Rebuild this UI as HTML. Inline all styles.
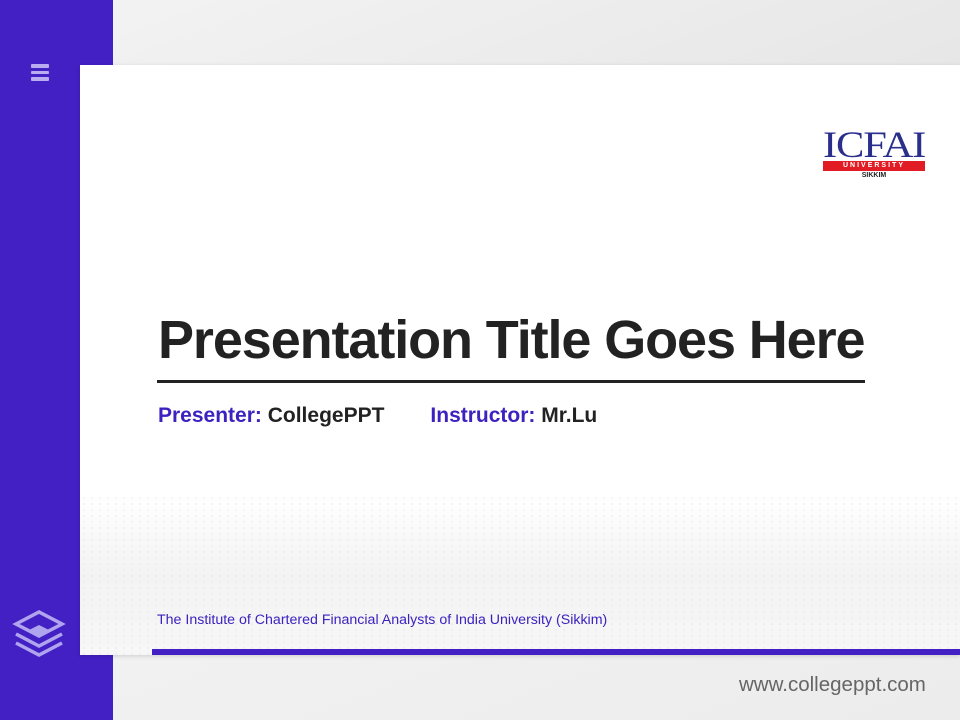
<!DOCTYPE html>
<html><head><style>
body{margin:0;width:960px;height:720px;overflow:hidden;position:relative;font-family:"Liberation Sans",sans-serif;background:linear-gradient(160deg,#f4f4f4,#e6e6e6 40%,#f2f2f2 60%,#ececec)}
.side{position:absolute;left:0;top:0;width:113px;height:720px;background:#4220c4}
.card{position:absolute;left:80px;top:65px;width:880px;height:590px;background:#fff;box-shadow:0 1px 4px rgba(0,0,0,.15);overflow:hidden}
.mesh{position:absolute;left:0;top:430px;width:880px;height:160px;background:linear-gradient(180deg,#fff,#f3f3f3 50%,#f7f7f7);}
.mesh:before{content:"";position:absolute;inset:0;background-image:radial-gradient(#dcdcdc 0.8px,transparent 1px);background-size:8px 6px;opacity:.6}
h1{position:absolute;left:78px;top:244px;margin:0;font-size:54px;font-weight:bold;color:#222;letter-spacing:-1.1px;white-space:nowrap}
.rule{position:absolute;left:77px;top:315px;width:708px;height:3px;background:#222}
.pres{position:absolute;left:78px;top:339px;font-size:21px;font-weight:bold;color:#222;white-space:nowrap}
.pres b{color:#3d22c0}
.foot{position:absolute;left:77px;top:547px;font-size:14.2px;color:#3d22c0;white-space:nowrap}
.bar{position:absolute;left:152px;top:649px;width:808px;height:6px;background:#4220c4}
.www{position:absolute;left:739px;top:673px;font-size:20.5px;color:#666}
</style></head><body>
<div class="side"></div>
<div style="position:absolute;left:31px;top:64px">
<div style="width:18px;height:3.5px;background:#b9adf0;margin-bottom:3px;border-radius:1px"></div>
<div style="width:18px;height:3.5px;background:#b9adf0;margin-bottom:3px;border-radius:1px"></div>
<div style="width:18px;height:3.5px;background:#b9adf0;border-radius:1px"></div></div>
<svg style="position:absolute;left:12px;top:608px" width="54" height="50" viewBox="0 0 54 50"><g fill="none" stroke="#b1a4ee" stroke-width="3.5"><path d="M4 16 L27 4 L50 16 L27 28 Z"/><path d="M4 26 L27 38 L50 26"/><path d="M4 35 L27 47 L50 35"/></g><path d="M17 22 L27 17 L37 22 L27 27 Z" fill="#b1a4ee"/></svg>
<div class="card">
<div class="mesh"></div>
<div style="position:absolute;left:743px;top:66px;width:102px;font-family:'Liberation Serif',serif;font-size:37px;color:#2b2f8c;letter-spacing:-1px;line-height:30px;transform:scaleX(1.15);transform-origin:left">ICFAI</div>
<div style="position:absolute;left:743px;top:96px;width:102px;height:10px;background:#e21c24;color:#fff;font-size:7px;font-weight:bold;text-align:center;line-height:10px;letter-spacing:2px">UNIVERSITY</div>
<div style="position:absolute;left:743px;top:107px;width:102px;text-align:center;font-size:7px;font-weight:bold;color:#222">SIKKIM</div>
<h1>Presentation Title Goes Here</h1>
<div class="rule"></div>
<div class="pres"><b>Presenter:</b> CollegePPT<span style="display:inline-block;width:46px"></span><b>Instructor:</b> Mr.Lu</div>
<div class="foot">The Institute of Chartered Financial Analysts of India University (Sikkim)</div>
</div>
<div class="bar"></div>
<div class="www">www.collegeppt.com</div>
</body></html>
